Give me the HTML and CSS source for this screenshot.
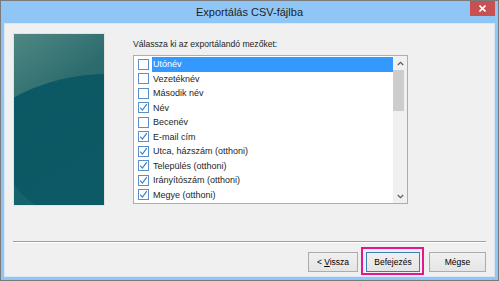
FILE: index.html
```html
<!DOCTYPE html>
<html lang="hu">
<head>
    <meta charset="UTF-8">
    <title>Exportálás CSV-fájlba</title>
    <link rel="stylesheet" href="styles.css">
</head>
<body>

<div class="window">
    <div class="titlebar">
        <span class="title">Exportálás CSV-fájlba</span>
        <span class="close">
            <svg width="7" height="7" viewBox="0 0 7 7"><path d="M0.5 0.5L6.5 6.5M6.5 0.5L0.5 6.5" stroke="#fff" stroke-width="1.6"/></svg>
        </span>
    </div>

    <div class="client">
        <div class="main">
            <div class="banner">
                <svg width="90" height="171" viewBox="0 0 90 171">
                    <defs>
                        <linearGradient id="sky" x1="0" y1="0" x2="0.4" y2="1">
                            <stop offset="0" stop-color="#4f8884"/>
                            <stop offset="0.45" stop-color="#2d6c6e"/>
                            <stop offset="1" stop-color="#1b6168"/>
                        </linearGradient>
                        <linearGradient id="sea" x1="0" y1="0" x2="0.6" y2="1">
                            <stop offset="0" stop-color="#0b5661"/>
                            <stop offset="0.6" stop-color="#0d5c68"/>
                            <stop offset="1" stop-color="#176c82"/>
                        </linearGradient>
                    </defs>
                    <rect width="90" height="171" fill="url(#sky)"/>
                    <circle cx="92" cy="232" r="192" fill="url(#sea)"/>
                    <path d="M0 150 Q10 165 22 171 L0 171 Z" fill="#1a6a72" opacity="0.6"/>
                </svg>
            </div>

            <div class="fields">
                <label class="prompt">Válassza ki az exportálandó mezőket:</label>
                <div class="listbox">
                    <ul class="items">
                        <li class="item selected"><span class="check"></span><span class="name">Utónév</span></li>
                        <li class="item"><span class="check"></span><span class="name">Vezetéknév</span></li>
                        <li class="item"><span class="check"></span><span class="name">Második név</span></li>
                        <li class="item"><span class="check on"><svg width="9" height="9" viewBox="0 0 9 9"><path d="M1.2 4.6L3.4 7.2L7.8 1.2" fill="none" stroke="#3a7cc4" stroke-width="1.1"/></svg></span><span class="name">Név</span></li>
                        <li class="item"><span class="check"></span><span class="name">Becenév</span></li>
                        <li class="item"><span class="check on"><svg width="9" height="9" viewBox="0 0 9 9"><path d="M1.2 4.6L3.4 7.2L7.8 1.2" fill="none" stroke="#3a7cc4" stroke-width="1.1"/></svg></span><span class="name">E-mail cím</span></li>
                        <li class="item"><span class="check on"><svg width="9" height="9" viewBox="0 0 9 9"><path d="M1.2 4.6L3.4 7.2L7.8 1.2" fill="none" stroke="#3a7cc4" stroke-width="1.1"/></svg></span><span class="name">Utca, házszám (otthoni)</span></li>
                        <li class="item"><span class="check on"><svg width="9" height="9" viewBox="0 0 9 9"><path d="M1.2 4.6L3.4 7.2L7.8 1.2" fill="none" stroke="#3a7cc4" stroke-width="1.1"/></svg></span><span class="name">Település (otthoni)</span></li>
                        <li class="item"><span class="check on"><svg width="9" height="9" viewBox="0 0 9 9"><path d="M1.2 4.6L3.4 7.2L7.8 1.2" fill="none" stroke="#3a7cc4" stroke-width="1.1"/></svg></span><span class="name">Irányítószám (otthoni)</span></li>
                        <li class="item"><span class="check on"><svg width="9" height="9" viewBox="0 0 9 9"><path d="M1.2 4.6L3.4 7.2L7.8 1.2" fill="none" stroke="#3a7cc4" stroke-width="1.1"/></svg></span><span class="name">Megye (otthoni)</span></li>
                    </ul>
                    <div class="scrollbar">
                        <div class="arrow"><svg width="7" height="5" viewBox="0 0 7 5"><path d="M0.8 4L3.5 1.3L6.2 4" fill="none" stroke="#606060" stroke-width="1.3"/></svg></div>
                        <div class="track"><div class="thumb"></div></div>
                        <div class="arrow"><svg width="7" height="5" viewBox="0 0 7 5"><path d="M0.8 1L3.5 3.7L6.2 1" fill="none" stroke="#606060" stroke-width="1.3"/></svg></div>
                    </div>
                </div>
            </div>
        </div>

        <div class="separator"></div>

        <div class="buttons">
            <button class="btn back">&lt; <u>V</u>issza</button>
            <div class="finish-wrap">
                <button class="btn finish">Befejezés</button>
                <span class="highlight"></span>
            </div>
            <button class="btn cancel">Mégse</button>
        </div>
    </div>
</div>

</body>
</html>
```

FILE: styles.css
```css
body { margin: 0; font-family: "Liberation Sans", Arial, sans-serif; }
.window { width: 499px; height: 281px; box-sizing: border-box; border: 1px solid #7a7a7a; background: #8fc6f6; padding: 0 3px 3px; display: flex; flex-direction: column; }
.titlebar { height: 22px; flex: none; position: relative; display: flex; align-items: center; justify-content: center; }
.title { font-size: 11px; color: #1e1e1e; }
.close { position: absolute; top: 0; right: 0; width: 25px; height: 15px; background: #c75050; display: flex; align-items: center; justify-content: center; }

.client { flex: 1; background: #f0f0f0; border: 1px solid #d9e7f4; display: flex; flex-direction: column; }
.main { display: flex; gap: 28px; margin: 9px 0 0 8px; }
.banner { width: 92px; height: 173px; box-sizing: border-box; border: 1px solid #e2e2e2; }
.banner svg { display: block; }

.fields { display: flex; flex-direction: column; }
.prompt { font-size: 8.6px; line-height: 12px; margin-top: 5px; color: #1e1e1e; }
.listbox { margin-top: 5px; width: 275px; height: 149px; box-sizing: border-box; border: 1px solid #abadb3; background: #fff; display: flex; }
.items { list-style: none; margin: 0; padding: 1px 0 0; flex: 1; }
.item { display: flex; align-items: center; height: 14.5px; font-size: 9px; color: #1e1e1e; }
.check { width: 11px; height: 11px; box-sizing: border-box; border: 1px solid #5b8fc8; margin: 0 3px 0 4px; background: #fff; display: flex; align-items: center; justify-content: center; }
.check svg { display: block; }
.name { align-self: stretch; display: flex; align-items: center; padding: 0 1px; }
.item.selected .name { flex: 1; background: #3399ff; color: #fff; }

.scrollbar { width: 14px; background: #f0f0f0; display: flex; flex-direction: column; }
.arrow { height: 14px; display: flex; align-items: center; justify-content: center; }
.track { flex: 1; }
.thumb { width: 11px; height: 41px; background: #cdcdcd; }

.separator { margin: 35px 8px 0; border-top: 1px solid #a0a0a0; border-bottom: 1px solid #fff; }

.buttons { display: flex; justify-content: flex-end; margin: 9px 8px 0 0; }
.btn { height: 20px; box-sizing: border-box; border: 1px solid #acacac; background: linear-gradient(#f0f0f0, #e5e5e5); font-family: "Liberation Sans", Arial, sans-serif; font-size: 8.5px; color: #000; padding: 0; }
.back { width: 50px; }
.finish-wrap { position: relative; margin-left: 8px; }
.finish { width: 54px; border-color: #3c7fb1; display: block; }
.highlight { position: absolute; left: -5px; top: -5px; width: 63px; height: 28px; box-sizing: border-box; border: 2px solid #e5178d; }
.cancel { width: 57px; margin-left: 9px; }
```
